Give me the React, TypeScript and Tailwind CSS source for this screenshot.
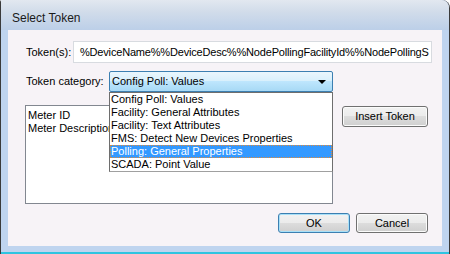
import React from "react";

const font = { fontFamily: '"Liberation Sans", Arial, sans-serif' };

function Btn({ label, focused, className }: { label: string; focused?: boolean; className: string }) {
  return (
    <div
      className={
        "flex items-center justify-center rounded-[3px] border text-[11px] text-black bg-[linear-gradient(#f2f2f2_0%,#ebebeb_50%,#dddddd_50%,#cfcfcf_100%)] " +
        (focused
          ? "border-[#3c7fb1] shadow-[inset_0_0_0_1px_#a8e0f8] "
          : "border-[#707070] shadow-[inset_0_0_0_1px_#fbfbfb] ") +
        className
      }
    >
      {label}
    </div>
  );
}

export default function App() {
  const items = [
    "Config Poll: Values",
    "Facility: General Attributes",
    "Facility: Text Attributes",
    "FMS: Detect New Devices Properties",
    "Polling: General Properties",
    "SCADA: Point Value",
  ];
  return (
    <div className="w-[450px] h-[254px] overflow-hidden bg-white" style={font}>
      <div className="relative w-[450px] h-[254px] border-x border-[#3a3a3a] rounded-tr-[8px] rounded-tl-[2px] bg-[#bfd4ef] flex flex-col">
        {/* title bar */}
        <div className="h-[30px] flex items-center pl-[11px] rounded-tr-[8px] bg-[linear-gradient(#e2e8f0_0%,#d1dcea_40%,#bccfe8_100%)]">
          <span className="text-[12px] text-[#1a1a1a] mt-[6px]">Select Token</span>
        </div>
        {/* client */}
        <div className="ml-[7px] w-[434px] h-[216px] bg-[#f7f3f7] relative pl-[17px] flex flex-col">
          {/* Row 1 */}
          <div className="flex items-center mt-[11px]">
            <div className="w-[48px] pl-px text-[11px] text-black">Token(s):</div>
            <div className="w-[359px] h-[22px] border border-[#d8dbe0] bg-white flex items-center pl-[6px] overflow-hidden whitespace-nowrap text-[11px] tracking-[-0.18px] text-black">
              %DeviceName%%DeviceDesc%%NodePollingFacilityId%%NodePollingS
            </div>
          </div>
          {/* Row 2 */}
          <div className="flex items-center mt-[8px]">
            <div className="w-[84px] pl-px text-[11px] text-black">Token category:</div>
            <div className="relative w-[224px] h-[21px] rounded-[2px] border border-[#3c7fb1] bg-[linear-gradient(#eaf6fd_0%,#d9f0fc_45%,#bee6fd_50%,#a7d9f5_100%)] flex items-center pl-[2px] text-[11px] text-black">
              Config Poll: Values
              <div className="absolute right-[6px] top-[8px] w-0 h-0 border-l-[4px] border-r-[4px] border-t-[4px] border-l-transparent border-r-transparent border-t-black" />
              {/* dropdown list */}
              <div className="absolute left-[-1px] top-[20px] w-[224px] h-[80px] bg-white border border-[#6e6e6e] border-b-[#a0a0a0] z-10 flex flex-col">
                {items.map((it, i) => (
                  <div
                    key={it}
                    className={
                      "h-[13px] leading-[13px] pl-px text-[11px] whitespace-nowrap " +
                      (i === 4
                        ? "bg-[#3399ff] text-white outline-1 outline-dotted outline-[#e08a3a] -outline-offset-1"
                        : "text-black")
                    }
                  >
                    {it}
                  </div>
                ))}
              </div>
            </div>
          </div>
          {/* Row 3 */}
          <div className="flex mt-[13px]">
            <div className="w-[308px] h-[99px] border border-[#828790] bg-white pl-[2px] pt-[3px] text-[11px] text-black leading-[13px]">
              <div>Meter ID</div>
              <div>Meter Description</div>
            </div>
            <Btn label="Insert Token" className="ml-[9px] mt-px w-[86px] h-[21px]" />
          </div>
          {/* Row 4 */}
          <div className="flex justify-end gap-[6px] mt-[9px] pr-[14px]">
            <Btn label="OK" focused className="w-[72px] h-[20px]" />
            <Btn label="Cancel" className="w-[72px] h-[20px]" />
          </div>
        </div>
        <div className="flex-1" />
        <div className="h-[2px] bg-[#2fc4e0]" />
      </div>
    </div>
  );
}
